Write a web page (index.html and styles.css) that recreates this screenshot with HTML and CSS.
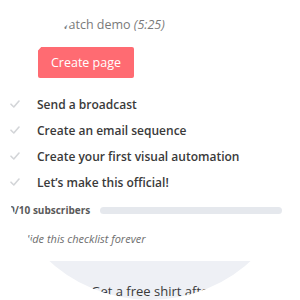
FILE: index.html
```html
<!DOCTYPE html>
<html>
<head>
<meta charset="utf-8">
<link rel="stylesheet" href="styles.css">
</head>
<body>
<div class="lens">
  <div class="panel">
    <div class="demo">Watch demo <em>(5:25)</em></div>
    <div class="btn-row"><button class="btn">Create page</button></div>
    <ul class="checklist">
      <li><svg class="check" viewBox="0 0 10 8" width="10" height="8"><path d="M1 4.2 L3.8 7 L9 1" fill="none" stroke="#d3d5d8" stroke-width="1.6" stroke-linecap="round" stroke-linejoin="round"/></svg><span>Send a broadcast</span></li>
      <li><svg class="check" viewBox="0 0 10 8" width="10" height="8"><path d="M1 4.2 L3.8 7 L9 1" fill="none" stroke="#d3d5d8" stroke-width="1.6" stroke-linecap="round" stroke-linejoin="round"/></svg><span>Create an email sequence</span></li>
      <li><svg class="check" viewBox="0 0 10 8" width="10" height="8"><path d="M1 4.2 L3.8 7 L9 1" fill="none" stroke="#d3d5d8" stroke-width="1.6" stroke-linecap="round" stroke-linejoin="round"/></svg><span>Create your first visual automation</span></li>
      <li><svg class="check" viewBox="0 0 10 8" width="10" height="8"><path d="M1 4.2 L3.8 7 L9 1" fill="none" stroke="#d3d5d8" stroke-width="1.6" stroke-linecap="round" stroke-linejoin="round"/></svg><span>Let’s make this official!</span></li>
    </ul>
    <div class="progress">
      <span class="count">0/10 subscribers</span>
      <div class="bar"></div>
    </div>
    <div class="hide">Hide this checklist forever</div>
  </div>
  <div class="footer">Get a free shirt after you reach 10 subscribers</div>
</div>
</body>
</html>
```
FILE: styles.css
```css
html, body {
  margin: 0;
  padding: 0;
  background: #ffffff;
}
body {
  font-family: "Open Sans", "DejaVu Sans", sans-serif;
  width: 300px;
  height: 300px;
  overflow: hidden;
}
.lens {
  width: 300px;
  height: 300px;
  border-radius: 50%;
  overflow: hidden;
  background: #ffffff;
  display: flex;
  flex-direction: column;
}
.panel {
  height: 262px;
  box-sizing: border-box;
  padding: 16px 0 0 4px;
}
.demo {
  margin-left: 53px;
  font-size: 12.5px;
  line-height: 18px;
  color: #7a7a7a;
}
.demo em {
  font-style: italic;
}
.btn-row {
  margin-top: 13px;
  margin-left: 34px;
}
.btn {
  border: 0;
  border-radius: 2px;
  background: #ff6b72;
  color: #ffffff;
  font-family: "Open Sans", sans-serif;
  font-size: 12.5px;
  height: 31px;
  width: 96px;
  padding: 0;
}
.checklist {
  list-style: none;
  margin: 13px 0 0 0;
  padding: 0;
}
.checklist li {
  display: flex;
  align-items: center;
  height: 26px;
  font-size: 12px;
  font-weight: 600;
  color: #3a3a3a;
}
.check {
  margin-left: 6px;
  margin-right: 17px;
  flex: none;
}
.progress {
  display: flex;
  align-items: center;
  margin-top: 5px;
  height: 20px;
}
.count {
  margin-left: 5px;
  font-size: 10px;
  font-weight: 700;
  color: #5a5a5a;
  white-space: nowrap;
}
.bar {
  margin-left: 10px;
  width: 182px;
  height: 7px;
  border-radius: 4px;
  background: #e5e8ed;
}
.hide {
  margin-top: 11px;
  font-size: 11px;
  font-style: italic;
  color: #6e6e6e;
  padding-left: 18px;
}
.footer {
  flex: 1;
  background: #eef0f5;
  font-size: 13px;
  color: #3a3a3a;
  padding-top: 21px;
  padding-left: 91px;
  white-space: nowrap;
}
```
